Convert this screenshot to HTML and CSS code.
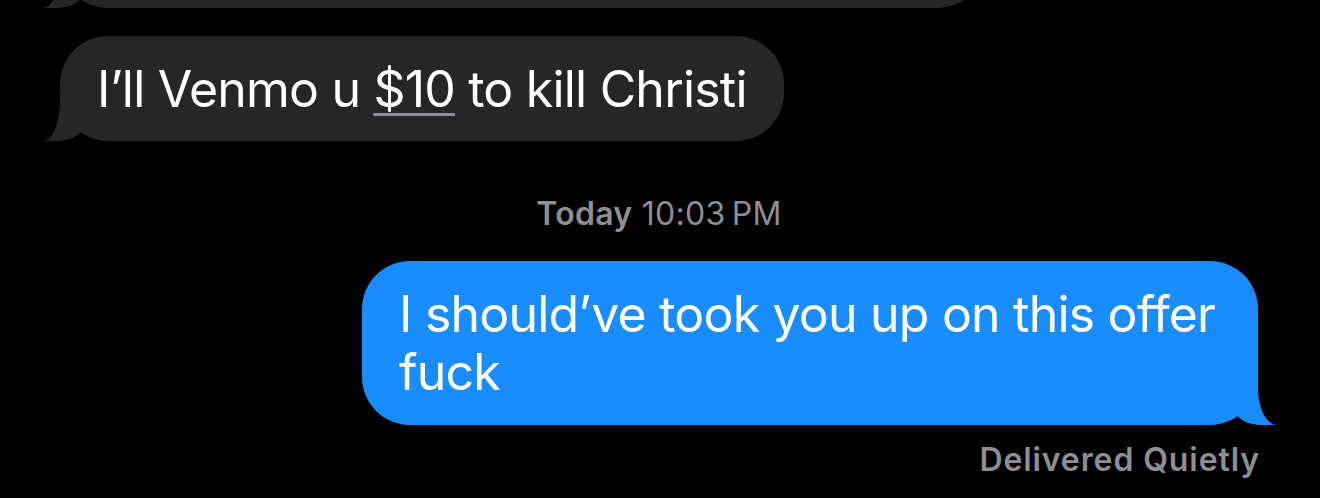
FILE: index.html
```html
<!DOCTYPE html>
<html lang="en">
<head>
<meta charset="utf-8">
<title>Messages</title>
<link rel="stylesheet" href="styles.css">
</head>
<body>
<div class="thread">
  <div class="row row-left">
    <div class="bubble recv partial"></div>
  </div>
  <div class="row row-left first-msg">
    <div class="bubble recv">I’ll Venmo u <span class="link">$10</span> to kill Christi</div>
  </div>
  <div class="stamp"><span class="stamp-day">Today</span> 10:03&#8239;PM</div>
  <div class="row row-right sent-row">
    <div class="bubble sent">I should’ve took you up on this offer fuck</div>
  </div>
  <div class="status">Delivered Quietly</div>
</div>
</body>
</html>
```
FILE: styles.css
```css
* { box-sizing: border-box; }
html, body {
  margin: 0;
  background: #000;
  height: 100%;
  overflow: hidden;
}
body {
  font-family: "Inter", "Noto Sans", "Liberation Sans", sans-serif;
  color: #fff;
}
.thread {
  display: flex;
  flex-direction: column;
  padding: 0 62px 0 60px;
}
.row {
  display: flex;
}
.row-left { justify-content: flex-start; }
.row-right { justify-content: flex-end; }

.bubble {
  position: relative;
  z-index: 0;
  border-radius: 48px;
  font-size: 50px;
  line-height: 58px;
  letter-spacing: -0.8px;
}
.recv {
  background: #262629;
  padding: 24px 37px 23px 37px;
}
.sent {
  background: #198cff;
  padding: 24px 38px 24px 37px;
  max-width: 896px;
}

/* tails */
.recv::before, .recv::after, .sent::before, .sent::after {
  content: "";
  position: absolute;
  bottom: 0;
  z-index: -1;
}
.recv::before {
  left: -17px;
  width: 39px;
  height: 48px;
  background: #262629;
  border-bottom-right-radius: 26px 14px;
}
.recv::after {
  left: -40px;
  width: 40px;
  height: 48px;
  background: #000;
  border-bottom-right-radius: 17px 40px;
}
.sent::before {
  right: -19px;
  width: 41px;
  height: 48px;
  background: #198cff;
  border-bottom-left-radius: 26px 14px;
}
.sent::after {
  right: -40px;
  width: 40px;
  height: 48px;
  background: #000;
  border-bottom-left-radius: 19px 36px;
}

.partial {
  width: 925px;
  height: 100px;
  margin-top: -92px;
}
.first-msg { margin-top: 28px; }

.link {
  text-decoration: underline;
  text-decoration-color: #8e8e93;
  text-decoration-thickness: 3px;
  text-underline-offset: 6px;
}

.stamp {
  margin-top: 53px;
  text-align: center;
  font-size: 32px;
  line-height: 40px;
  letter-spacing: 0.3px;
  color: #8e8e93;
}
.stamp-day { font-weight: 600; }
.sent-row { margin-top: 27px; }
.status {
  margin-top: 15px;
  margin-right: -2px;
  text-align: right;
  font-size: 32px;
  line-height: 40px;
  font-weight: 600;
  letter-spacing: 0.9px;
  color: #8e8e93;
}
```
